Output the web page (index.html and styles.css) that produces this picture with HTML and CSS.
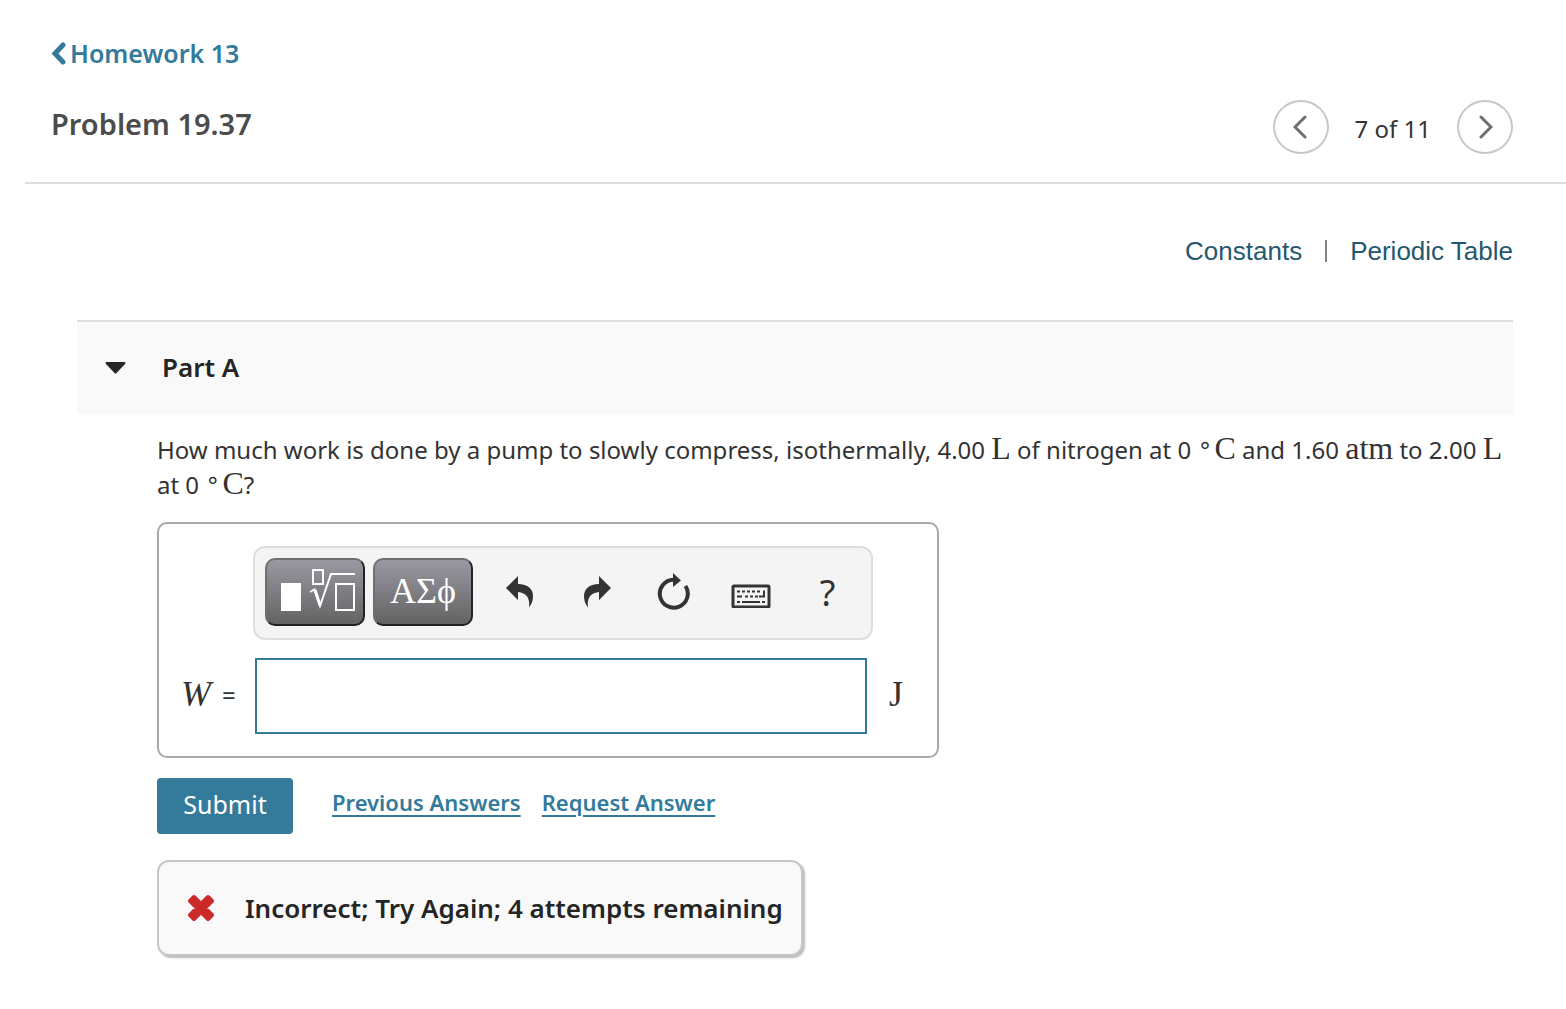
FILE: index.html
```html
<!DOCTYPE html>
<html lang="en">
<head>
    <meta charset="UTF-8">
    <meta name="viewport" content="width=device-width, initial-scale=1.0">
    <title>Problem 19.37 - Homework 13</title>
    <link rel="stylesheet" href="styles.css">
</head>
<body>
    <header class="page-header">
        <a href="#" class="back-link">
            <svg width="17" height="24" viewBox="0 0 17 24" aria-hidden="true"><path d="M12 4L4 12.500L12 21" fill="none" stroke="currentColor" stroke-width="5" stroke-linecap="round" stroke-linejoin="miter"/></svg>
            <span>Homework 13</span>
        </a>
        <div class="title-row">
            <h1>Problem 19.37</h1>
            <nav class="pager">
                <button type="button" class="pager-button" aria-label="Previous problem">
                    <svg width="16" height="26" viewBox="0 0 16 26"><path d="M12 3L2 13L12 23" fill="none" stroke="currentColor" stroke-width="3" stroke-linecap="round"/></svg>
                </button>
                <span class="pager-text">7 of 11</span>
                <button type="button" class="pager-button" aria-label="Next problem">
                    <svg width="16" height="26" viewBox="0 0 16 26"><path d="M4 3L14 13L4 23" fill="none" stroke="currentColor" stroke-width="3" stroke-linecap="round"/></svg>
                </button>
            </nav>
        </div>
    </header>
    <main>
        <div class="resources">
            <a href="#">Constants</a>
            <span class="divider"></span>
            <a href="#">Periodic Table</a>
        </div>
        <section class="part">
            <div class="part-header">
                <svg width="22" height="12" viewBox="0 0 22 12" aria-hidden="true"><path d="M1 0H20Q21 1 20 2L11.500 11Q10.500 12 9.500 11L1 2Q0 1 1 0Z" fill="#252525"/></svg>
                <h2>Part A</h2>
            </div>
            <div class="part-body">
                <p class="question">How much work is done by a pump to slowly compress, isothermally, 4.00 <span class="unit">L</span> of nitrogen at 0 <span class="unit"><span class="degree">∘</span>C</span> and 1.60 <span class="unit">atm</span> to 2.00 <span class="unit">L</span> at 0 <span class="unit"><span class="degree">∘</span>C</span>?</p>
                <form id="answer-form">
                    <div class="answer-box">
                        <div class="toolbar">
                            <button type="button" class="palette-button" aria-label="Templates">
                                <svg width="76" height="44" viewBox="0 0 76 44">
                                    <rect x="4" y="14" width="20" height="28" fill="#fff"/>
                                    <path d="M36 1H46V15H36ZM59 15H77V41H59ZM33 23L37.500 20.500L43 37L54 5H78" fill="none" stroke="#fff" stroke-width="2"/>
                                    <path d="M38 21L43 36" stroke="#fff" stroke-width="3"/>
                                </svg>
                            </button>
                            <button type="button" class="palette-button">ΑΣϕ</button>
                            <button type="button" class="tool-button" aria-label="Undo">
                                <svg width="28" height="32" viewBox="0 0 28 32"><path d="M0 12L12 0V8C22 8 27 13 27 20C27 24 26 28 23 31.500C24 24 22 17 12 16V24Z" fill="#333"/></svg>
                            </button>
                            <button type="button" class="tool-button" aria-label="Redo">
                                <svg width="28" height="32" viewBox="0 0 28 32"><path d="M28 12L16 0V8C6 8 1 13 1 20C1 24 2 28 5 31.500C4 24 6 17 16 16V24Z" fill="#333"/></svg>
                            </button>
                            <button type="button" class="tool-button" aria-label="Reset">
                                <svg width="34" height="38" viewBox="0 0 34 38"><path d="M16.500 6.700A14 14 0 1 0 28.500 13" fill="none" stroke="#333" stroke-width="4"/><path d="M16 0L24 7.500L16 14Z" fill="#333"/></svg>
                            </button>
                            <button type="button" class="tool-button" aria-label="Keyboard shortcuts">
                                <svg class="keyboard-icon" width="40" height="24" viewBox="0 0 40 24">
                                    <rect x="2" y="2" width="36" height="21" rx="1" fill="none" stroke="#333" stroke-width="3"/>
                                    <path d="M6 7.500H29M14 12.500H28" fill="none" stroke="#333" stroke-width="2" stroke-dasharray="3 2"/>
                                    <path d="M6 12.500H11M11 18H29M6 18H9M31 18H34M33 6.500V12.500H28" fill="none" stroke="#333" stroke-width="2"/>
                                </svg>
                            </button>
                            <button type="button" class="tool-button">?</button>
                        </div>
                        <div class="answer-row">
                            <label for="answer"><i>W</i> <span class="equals">=</span></label>
                            <input type="text" id="answer" autocomplete="off">
                            <span class="answer-unit">J</span>
                        </div>
                    </div>
                    <div class="actions">
                        <button type="submit" class="submit-button">Submit</button>
                        <a href="#">Previous Answers</a>
                        <a href="#">Request Answer</a>
                    </div>
                </form>
                <div class="feedback" role="status">
                    <svg width="28" height="28" viewBox="0 0 28 28" aria-hidden="true"><path d="M3 7L7 3L14 10L21 3L25 7L18 14L25 21L21 25L14 18L7 25L3 21L10 14Z" fill="#cc292b" stroke="#cc292b" stroke-width="4" stroke-linejoin="round"/></svg>
                    <span>Incorrect; Try Again; 4 attempts remaining</span>
                </div>
            </div>
        </section>
    </main>
</body>
</html>
```
FILE: styles.css
```css
* {
    box-sizing: border-box;
}

body {
    margin: 0;
    background-color: #fff;
    color: #333;
    font-family: "Noto Sans", sans-serif;
    font-size: 24px;
    line-height: 34px;
}

a {
    color: #347a9b;
}

button {
    padding: 0;
    font-family: inherit;
    cursor: pointer;
}

h1, h2, p {
    margin: 0;
}

svg {
    display: block;
}

.page-header {
    margin-left: 25px;
    padding: 36px 53px 28px 26px;
    border-bottom: 2px solid #dedede;
}

.back-link {
    display: inline-flex;
    align-items: center;
    gap: 2px;
    font-size: 25px;
    font-weight: 600;
    text-decoration: none;
}

.title-row {
    display: flex;
    justify-content: space-between;
    align-items: center;
    margin-top: 27px;
}

h1 {
    padding-bottom: 6px;
    color: #4c4c4c;
    font-size: 29px;
    font-weight: 600;
}

.pager {
    display: flex;
    align-items: center;
    gap: 26px;
}

.pager-text {
    padding-top: 4px;
}

.pager-button {
    display: flex;
    align-items: center;
    justify-content: center;
    width: 56px;
    height: 54px;
    border: 2px solid #c7c7c7;
    border-radius: 50%;
    background-color: #fff;
    color: #6a7070;
}

.resources {
    display: flex;
    justify-content: flex-end;
    align-items: center;
    gap: 23px;
    padding: 50px 53px 0 0;
    font-family: "Liberation Sans", sans-serif;
    font-size: 26px;
}

.resources a {
    color: #25586d;
    text-decoration: none;
}

.divider {
    width: 2px;
    height: 22px;
    background-color: #7f8682;
}

.part {
    margin: 52px 53px 0 77px;
}

.part-header {
    display: flex;
    align-items: center;
    gap: 35px;
    height: 94px;
    padding-left: 28px;
    border-top: 2px solid #dedede;
    background-color: #f9f9f9;
}

h2 {
    padding-bottom: 2px;
    color: #252525;
    font-size: 26px;
    font-weight: 600;
}

.part-body {
    padding: 18px 0 50px 80px;
}

.unit,
.answer-unit {
    font-family: "Liberation Serif", serif;
    font-size: 32px;
    line-height: 32px;
}

.degree {
    margin-right: 2px;
    font-family: "DejaVu Sans", sans-serif;
    font-size: 24px;
    line-height: 0;
    vertical-align: 6px;
}

.answer-box {
    width: 782px;
    max-width: 100%;
    margin-top: 20px;
    padding: 22px;
    border: 2px solid #a9a9a9;
    border-radius: 10px;
}

.toolbar {
    display: flex;
    align-items: center;
    width: 620px;
    height: 94px;
    margin-left: 72px;
    padding: 0 0 2px 10px;
    border: 2px solid #dedede;
    border-radius: 12px;
    background-color: #f4f4f4;
}

.palette-button {
    display: flex;
    align-items: center;
    justify-content: center;
    width: 100px;
    height: 68px;
    margin-right: 8px;
    padding-bottom: 2px;
    border: 2px solid;
    border-color: #707070 #222 #222 #707070;
    border-radius: 10px;
    background: linear-gradient(#9a98a2, #636363);
    color: #fff;
    font-family: "Liberation Serif", serif;
    font-size: 36px;
}

.palette-button svg {
    overflow: visible;
}

.tool-button {
    display: flex;
    align-items: center;
    justify-content: center;
    width: 77px;
    height: 68px;
    border: none;
    background: none;
    color: #333;
    font-size: 36px;
}

.keyboard-icon {
    margin-top: 8px;
}

.answer-row {
    display: flex;
    align-items: center;
    margin-top: 18px;
}

.answer-row label {
    width: 74px;
    padding-bottom: 4px;
    font-family: "Liberation Serif", serif;
    font-size: 36px;
}

.equals {
    margin-left: 2px;
    font-family: "Noto Sans", sans-serif;
    font-size: 24px;
    line-height: 0;
    vertical-align: 2px;
}

.answer-row input {
    width: 612px;
    height: 76px;
    padding: 0 16px;
    border: 2px solid #347a9b;
    font-family: inherit;
    font-size: 26px;
}

.answer-unit {
    margin-left: 22px;
    padding-bottom: 4px;
    font-size: 36px;
}

.actions {
    display: flex;
    align-items: flex-start;
    margin-top: 20px;
}

.actions a {
    margin: 7px 21px 0 0;
    font-size: 22px;
    font-weight: 600;
    text-decoration-thickness: 2px;
    text-underline-offset: 4px;
}

.submit-button {
    width: 136px;
    height: 56px;
    margin-right: 39px;
    padding-bottom: 4px;
    border: none;
    border-radius: 4px;
    background-color: #347a9b;
    color: #fff;
    font-size: 25px;
}

.feedback {
    display: inline-flex;
    align-items: center;
    gap: 30px;
    height: 96px;
    margin-top: 26px;
    padding: 0 18px 0 28px;
    border: 2px solid #c7c7c7;
    border-radius: 12px;
    background-color: #f9f9f9;
    box-shadow: 2px 2px 2px #bbb;
    color: #252525;
    font-size: 26px;
    font-weight: 600;
}
```
